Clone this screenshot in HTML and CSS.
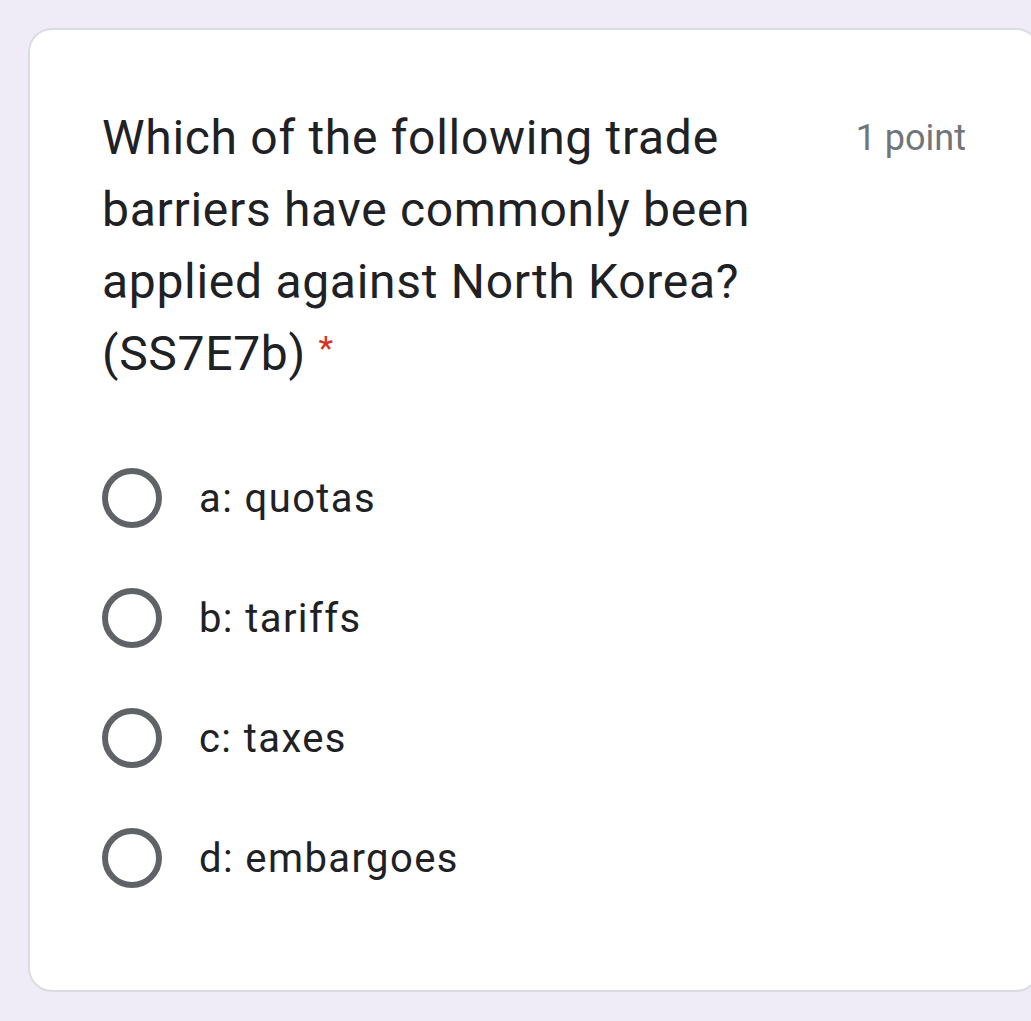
FILE: index.html
```html
<!DOCTYPE html>
<html lang="en">
  <head>
    <meta charset="UTF-8" />
    <meta name="viewport" content="width=device-width, initial-scale=1.0" />
    <title>Question</title>
    <link rel="stylesheet" href="styles.css">
  </head>
  <body>
    <div class="card">
      <div class="header">
        <div class="title">
          Which of the following trade barriers have commonly been applied
          against North Korea? (SS7E7b) <span class="required">*</span>
        </div>
        <div class="points">1 point</div>
      </div>
      <div class="options">
        <label class="option">
          <span class="radio"></span>
          <span class="label">a: quotas</span>
        </label>
        <label class="option">
          <span class="radio"></span>
          <span class="label">b: tariffs</span>
        </label>
        <label class="option">
          <span class="radio"></span>
          <span class="label">c: taxes</span>
        </label>
        <label class="option">
          <span class="radio"></span>
          <span class="label">d: embargoes</span>
        </label>
      </div>
    </div>
  </body>
</html>
```

FILE: styles.css
```css
* {
  margin: 0px;
  padding: 0px;
  box-sizing: border-box;
}
body {
  background-color: #efecf7;
  font-family: Roboto, "Liberation Sans", sans-serif;
  color: #202124;
  overflow: hidden;
}
.card {
  width: 1012px;
  margin-left: 28px;
  margin-top: 28px;
  padding: 72px;
  background-color: #ffffff;
  border: 2px solid #dadce0;
  border-radius: 24px;
}
.header {
  display: flex;
  align-items: flex-start;
}
.title {
  width: 680px;
  font-size: 48px;
  line-height: 72px;
  letter-spacing: 0.7px;
}
.required {
  color: #d93025;
  font-size: 34px;
  line-height: 34px;
  vertical-align: 10px;
  letter-spacing: 0px;
}
.points {
  margin-left: auto;
  font-size: 36px;
  line-height: 72px;
  color: #70757a;
}
.options {
  margin-top: 48px;
}
.option {
  display: flex;
  align-items: center;
  height: 120px;
}
.radio {
  width: 60px;
  height: 60px;
  border: 6px solid #5f6368;
  border-radius: 50%;
}
.label {
  margin-left: 37px;
  font-size: 40px;
  letter-spacing: 1.4px;
}
```
